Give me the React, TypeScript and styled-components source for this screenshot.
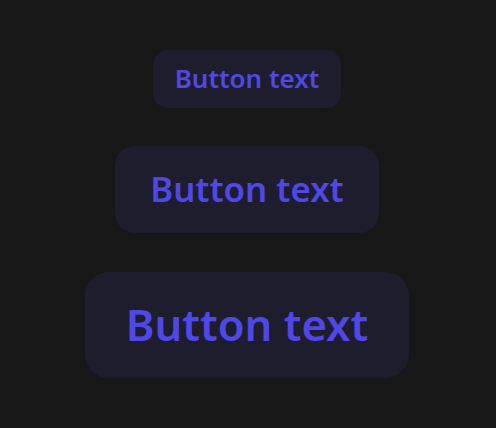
import React from "react";
import styled, { createGlobalStyle, css } from "styled-components";

const Global = createGlobalStyle`
  html, body {
    margin: 0;
    padding: 0;
    background: #171717;
  }
  #root {
    min-height: 100vh;
  }
`;

const Stage = styled.main`
  min-height: 100vh;
  display: flex;
  flex-direction: column;
  align-items: center;
  justify-content: center;
  gap: 38.5px;
  padding-right: 2px;
  box-sizing: border-box;
`;

type Size = "sm" | "md" | "lg";

const sizes = {
  sm: css`
    font-size: 26px;
    padding: 15px 22px 17px;
    border-radius: 15px;
  `,
  md: css`
    font-size: 34.8px;
    padding: 26px 35px;
    border-radius: 20px;
  `,
  lg: css`
    font-size: 43.6px;
    padding: 31.5px 40.5px;
    border-radius: 24px;
  `,
};

const Button = styled.button<{ $size: Size }>`
  appearance: none;
  border: none;
  margin: 0;
  background: #1e1d2e;
  color: #4f48e6;
  font-family: "Noto Sans", "Open Sans", sans-serif;
  font-weight: 600;
  line-height: 1;
  cursor: pointer;
  ${(p) => sizes[p.$size]}
`;

export default function App() {
  return (
    <>
      <Global />
      <Stage>
        <Button $size="sm">Button text</Button>
        <Button $size="md">Button text</Button>
        <Button $size="lg">Button text</Button>
      </Stage>
    </>
  );
}
